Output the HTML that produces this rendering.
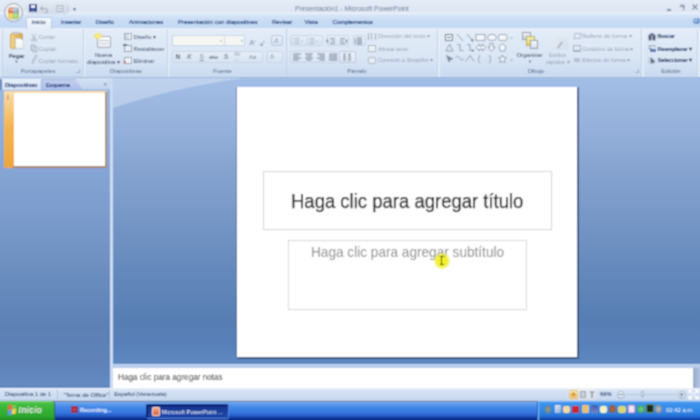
<!DOCTYPE html>
<html><head><meta charset="utf-8">
<style>
*{margin:0;padding:0;box-sizing:border-box}
html,body{width:700px;height:420px;overflow:hidden;background:#c9daf0;font-family:"Liberation Sans",sans-serif}
.a{position:absolute}
#title{left:-4px;top:-4px;width:708px;height:18px;background:linear-gradient(#e7eef8,#dde6f3 85%,#eef3fa)}
#tabs{left:-4px;top:14px;width:708px;height:15px;background:linear-gradient(#dae7f8,#c9dcf5 40%,#c2d7f3)}
#ribbon{left:-4px;top:28px;width:708px;height:50px;background:linear-gradient(#e6eef9,#d4e1f3);border-bottom:1px solid #9fb8dc}
.grp{position:absolute;top:29px;height:48px;border-right:1px solid #c0d1e8;box-shadow:1px 0 0 #eef4fb;background:linear-gradient(#e3ecf8,#dbe6f5 55%,#d3e1f3 78%,#cadaf0)}
.glab{position:absolute;left:0;right:0;bottom:0;height:11px;background:linear-gradient(#d3e1f3,#c9daf0);font-size:5.9px;color:#4f6488;text-align:center;line-height:10px;white-space:nowrap}
.t{position:absolute;white-space:nowrap;font-size:6px;color:#34496a;line-height:8px}
.dis{color:#96a3b6}
.tab{position:absolute;top:18px;font-size:6px;color:#1c3a72;-webkit-text-stroke:0.15px #1c3a72;white-space:nowrap;line-height:9px}
#main{left:113px;top:78px;width:591px;height:286px;background:linear-gradient(rgb(162,190,230) 0%,rgb(150,178,220) 16%,rgb(136,165,209) 30%,rgb(94,132,184) 74%,rgb(87,126,180) 85%,rgb(88,128,184) 93%,rgb(94,136,192) 100%)}
#sheen{left:113px;top:78px;width:587px;height:40px;background:linear-gradient(172deg,rgba(255,255,255,.25) 0,rgba(255,255,255,.12) 45%,rgba(255,255,255,0) 45.5%)}
#left{left:-4px;top:78px;width:114px;height:310px;background:linear-gradient(rgb(158,186,226) 0%,rgb(130,162,210) 34%,rgb(118,152,200) 50%,rgb(92,128,180) 80%,rgb(94,131,185) 92%,rgb(100,138,194) 100%)}
#split{left:110px;top:78px;width:3px;height:310px;background:linear-gradient(90deg,#bcd2ee,#d4e3f6 50%,#bad0ee)}
#notes{left:113px;top:368px;width:580px;height:20px;background:#fff}
#nband{left:113px;top:364px;width:591px;height:4px;background:linear-gradient(#c3d6f0,#b2c9ea)}
#nscroll{left:693px;top:368px;width:11px;height:20px;background:linear-gradient(90deg,#93a9cc,#b3c3dd 60%,#a2b5d5)}
#status{left:-4px;top:388px;width:708px;height:13px;background:linear-gradient(#eaf0f9 0,#eaf0f9 1px,#d6e3f4 2px,#c9daf0 11px,#b9cce8 13px)}
#taskbar{left:-4px;top:401px;width:708px;height:23px;background:linear-gradient(#5d6e8e 0,#5d6e8e 1px,#80b4f4 1px,#5a98ec 3px,#4185e6 7px,#3474dc 12px,#2458c4 15px,#12389e 17px,#0b2680 19px,#0b2680 23px)}
#slide{left:237px;top:87px;width:340px;height:270px;background:#fff;box-shadow:-1px 0 0 rgba(60,80,125,.45),2px 0 0 rgba(60,78,120,.65),0 2px 0 rgba(60,78,120,.6),2px 2px 0 rgba(60,78,120,.6)}
.ico{position:absolute}
</style></head><body><svg width="0" height="0" style="position:absolute"><filter id="bl" x="0" y="0" width="100%" height="100%"><feConvolveMatrix order="3" kernelMatrix="1 2 1 2 4 2 1 2 1" divisor="16" edgeMode="duplicate" preserveAlpha="true"/></filter></svg><div id="wrap" style="position:absolute;left:-4px;top:-4px;width:708px;height:428px;filter:url(#bl);background:#dfe8f4"><div style="position:absolute;left:4px;top:4px;width:700px;height:420px">
<div id="title" class="a"></div>
<div id="tabs" class="a"></div>
<div id="ribbon" class="a"></div>

<!-- title bar contents -->
<div class="a" style="left:25px;top:2px;width:46px;height:12px;border-radius:6px;background:linear-gradient(#e3e9f2,#d2dae6)"></div>
<div class="a" style="left:29px;top:4px;width:7.5px;height:8px;background:#263f88;border-radius:1px"></div>
<div class="a" style="left:30.5px;top:4.5px;width:4.5px;height:3px;background:#e4ebf5"></div><div class="a" style="left:31px;top:9.5px;width:3.5px;height:2px;background:#6a7fb0"></div>
<svg class="a" style="left:39px;top:3px" width="10" height="10"><path d="M2.5 5.5h4a2.3 2.3 0 0 1 0 4.5h-2" fill="none" stroke="#9aa7ba" stroke-width="1.2"/><path d="M1 5.5l2.5-2.5v5z" fill="#9aa7ba"/></svg>
<svg class="a" style="left:55px;top:3px" width="10" height="10"><rect x="2" y="2.5" width="6" height="6" fill="none" stroke="#aab5c6" stroke-width="1"/><path d="M4 5.5h3" stroke="#aab5c6"/></svg><div class="a" style="left:67px;top:5px;width:1px;height:6px;background:#c3ccd9"></div>
<div class="a" style="left:72px;top:6px;font-size:5px;color:#3c4f6e">&#9660;</div>
<div class="t" style="left:295px;top:4px;font-size:6.8px;color:#6f7f98;line-height:9px">Presentación1 - Microsoft PowerPoint</div>
<div class="a" style="left:667px;top:9px;width:4px;height:1.5px;background:#7d8aa0"></div>
<svg class="a" style="left:677px;top:3px" width="9" height="9"><path d="M2.5 3.5h4v4M3.5 2h3.5v3.5" fill="none" stroke="#7d8aa0" stroke-width="1"/></svg>
<svg class="a" style="left:691px;top:3px" width="8" height="8"><path d="M1.5 1.5l5 5M6.5 1.5l-5 5" stroke="#7d8aa0" stroke-width="1.1"/></svg>
<!-- office button -->
<div class="a" style="left:4px;top:3px;width:19px;height:19px;border-radius:50%;background:radial-gradient(circle at 50% 45%,#ffffff 0,#f6f6f2 50%,#e2e5e8 72%,#aeb6c2 88%,#c9d0da 100%);border:1px solid #98a2b0"></div>
<div class="a" style="left:7.5px;top:7px;width:5.5px;height:6px;background:radial-gradient(circle at 60% 60%,#e88a5a,#c8563a);border-radius:3px 0 0 0"></div>
<div class="a" style="left:13px;top:7px;width:5.5px;height:6px;background:radial-gradient(circle at 40% 60%,#a9b8c8,#7f93ad);border-radius:0 3px 0 0"></div>
<div class="a" style="left:7.5px;top:13px;width:5.5px;height:6px;background:radial-gradient(circle at 60% 40%,#f4e07a,#e2b83a);border-radius:0 0 0 3px"></div>
<div class="a" style="left:13px;top:13px;width:5.5px;height:6px;background:radial-gradient(circle at 40% 40%,#c9e6a0,#7fb54a);border-radius:0 0 3px 0"></div>
<div class="a" style="left:8px;top:6px;width:10px;height:5px;border-radius:50%;background:rgba(255,255,255,.35)"></div>
<!-- tabs -->
<div class="a" style="left:26px;top:17px;width:26px;height:12px;background:linear-gradient(#f4f8fd,#e3ecf8);border:1px solid #b8cbe6;border-bottom:none;border-radius:2px 2px 0 0"></div>
<div class="tab" style="left:31.5px;color:#4a5a75">Inicio</div>
<div class="tab" style="left:61px">Insertar</div>
<div class="tab" style="left:95.5px">Diseño</div>
<div class="tab" style="left:129px">Animaciones</div>
<div class="tab" style="left:178px">Presentación con diapositivas</div>
<div class="tab" style="left:272px">Revisar</div>
<div class="tab" style="left:304.5px">Vista</div>
<div class="tab" style="left:332.5px">Complementos</div>
<div class="a" style="left:693px;top:17.5px;width:6.5px;height:6.5px;border-radius:50%;background:radial-gradient(circle at 40% 35%,#a9c6ee,#3f6fb8)"></div>

<!-- groups -->
<div class="grp" style="left:2px;width:82px;border-left:1px solid #c6d6eb"><div class="glab" style="padding-right:10px">Portapapeles</div></div>
<div class="grp" style="left:85px;width:83px"><div class="glab">Diapositivas</div></div>
<div class="grp" style="left:169px;width:118px"><div class="glab" style="padding-right:10px">Fuente</div></div>
<div class="grp" style="left:287px;width:151px"><div class="glab" style="padding-right:10px">Párrafo</div></div>
<div class="grp" style="left:441px;width:201px"><div class="glab" style="padding-right:10px">Dibujo</div></div>
<div class="grp" style="left:645px;width:53px"><div class="glab">Edición</div></div>

<!-- Portapapeles -->
<div class="a" style="left:9.5px;top:33px;width:13px;height:15.5px;background:linear-gradient(90deg,#f3d98a,#e6bd5a 45%,#d9a94a);border:1px solid #c99a48;border-radius:2px"></div>
<div class="a" style="left:13px;top:31.5px;width:6px;height:3px;background:#eae6dc;border:1px solid #b3a890;border-radius:1px"></div>
<div class="a" style="left:15px;top:38px;width:8.5px;height:11px;background:linear-gradient(135deg,#ffffff,#eef0f2);border:1px solid #c6c9cf;clip-path:polygon(0 0,65% 0,100% 30%,100% 100%,0 100%)"></div>
<div class="t" style="left:8.8px;top:51.5px;font-size:5.8px;color:#1f2d4a;font-weight:bold;letter-spacing:-0.1px">Pegar</div>
<div class="t" style="left:14.5px;top:58px;font-size:4px;color:#4a5870">&#9660;</div>
<svg class="a" style="left:30px;top:33px" width="8" height="32" fill="none" stroke="#aab5c4" stroke-width="0.9">
<path d="M2 1l3 5M6 1l-3 5"/><circle cx="2.5" cy="7" r="1.3"/><circle cx="5.5" cy="7" r="1.3"/>
<rect x="1" y="12" width="4" height="5"/><rect x="3" y="14" width="4" height="5" fill="#dfe7f2"/>
<path d="M5.5 23.5l-3 6" stroke-width="1.4"/><path d="M5 22.5h2v2" stroke-width="0.8"/>
</svg>
<div class="t dis" style="left:38.5px;top:33px;font-size:6px">Cortar</div>
<div class="a" style="left:31px;top:45px;width:5px;height:6px;border:1px solid #b7c2d0"></div>
<div class="t dis" style="left:38.5px;top:45px;font-size:6px">Copiar</div>
<div class="a" style="left:33px;top:56px;width:2px;height:8px;background:#b9c3d0;transform:rotate(25deg)"></div>
<div class="t dis" style="left:38.5px;top:56.7px;font-size:6px">Copiar formato</div>
<div class="a" style="left:76px;top:69px;width:4px;height:4px;border-right:1px solid #9fb0c8;border-bottom:1px solid #9fb0c8"></div>

<!-- Diapositivas -->
<div class="a" style="left:97px;top:36px;width:14px;height:12px;background:linear-gradient(#fdfdfd,#e9edf2);border:1px solid #9aa6b5;border-radius:1px"></div>
<div class="a" style="left:99px;top:40px;width:10px;height:1px;background:#b9c2ce"></div>
<div class="a" style="left:99px;top:43px;width:10px;height:1px;background:#c9d0da"></div>
<div class="a" style="left:94px;top:32.5px;width:8px;height:6px;border-radius:50%;background:radial-gradient(#fffbb0,#f2e060 50%,rgba(240,224,80,0) 100%)"></div>
<div class="t" style="left:95px;top:50.8px;font-size:6px;color:#2a3a55">Nueva</div>
<div class="t" style="left:87px;top:57.8px;font-size:6px;color:#2a3a55">diapositiva &#9662;</div>
<div class="a" style="left:124px;top:33px;width:8px;height:7px;background:linear-gradient(90deg,#c7cfd9,#eef1f5);border:1px solid #9ca8b8"></div>
<div class="t" style="left:133.5px;top:32.7px;font-size:5.8px;color:#34496a">Diseño &#9662;</div>
<div class="a" style="left:124px;top:45px;width:8px;height:7px;background:#e9edf2;border:1px solid #8f9cad"></div>
<div class="a" style="left:123px;top:44px;width:4px;height:2px;background:#5a6a85"></div>
<div class="t" style="left:133.5px;top:44.6px;font-size:5.8px;color:#34496a">Restablecer</div>
<div class="a" style="left:124px;top:57px;width:8px;height:7px;background:#eef1f5;border:1px solid #9ca8b8"></div>
<div class="a" style="left:123px;top:60px;width:5px;height:4px;color:#d03030;font-size:6px;line-height:4px">&#215;</div>
<div class="t" style="left:133.5px;top:56.6px;font-size:5.8px;color:#34496a">Eliminar</div>

<!-- Fuente -->
<div class="a" style="left:172px;top:35px;width:53px;height:11px;background:#f6f7f1;border:1px solid #c9d6e8"></div>
<div class="t" style="left:220px;top:37px;font-size:4px;color:#9aa6b6">&#9662;</div>
<div class="a" style="left:225px;top:35px;width:20px;height:11px;background:#f4f6f4;border:1px solid #c9d6e8;border-left:none"></div>
<div class="t" style="left:241px;top:37px;font-size:4px;color:#9aa6b6">&#9662;</div>

<div class="t" style="left:249.5px;top:37px;font-size:6.5px;color:#6f7b8e">A<sup style="font-size:3px">▴</sup></div>
<div class="t" style="left:260px;top:38px;font-size:5.5px;color:#6f7b8e">a<sup style="font-size:3px">▾</sup></div>
<div class="a" style="left:271px;top:35px;width:12px;height:11px;border:1px solid #bcc9dc;border-radius:2px;background:linear-gradient(#e8eef7,#d5e0ef)"></div>
<div class="t" style="left:274px;top:36.5px;font-size:6.5px;color:#9aa4b3;font-style:italic">A</div>
<div class="a" style="left:172px;top:51px;width:91px;height:12px;border:1px solid #c8d5e7;border-radius:2px;background:linear-gradient(#e6eef8,#d7e3f3)"></div>
<div class="t" style="left:175.5px;top:53px;font-size:6.5px;color:#4e5a6c;font-weight:bold">N</div>
<div class="t" style="left:187px;top:53px;font-size:6.5px;color:#7d889a;font-style:italic;font-weight:bold">K</div>
<div class="t" style="left:199.5px;top:53px;font-size:6.5px;color:#7d889a;text-decoration:underline">S</div>
<div class="t" style="left:209px;top:53px;font-size:5.5px;color:#7d889a;text-decoration:line-through">abc</div>
<div class="t" style="left:224px;top:53px;font-size:6.5px;color:#7d889a;font-weight:bold">S</div>
<div class="t" style="left:234px;top:52px;font-size:5px;color:#8e99aa;line-height:5px">AV<br>&#8596;</div>
<div class="t" style="left:249px;top:53px;font-size:6px;color:#7d889a">Aa</div>
<div class="a" style="left:267px;top:51px;width:16px;height:12px;border:1px solid #c8d5e7;border-radius:2px;background:linear-gradient(#e6eef8,#d7e3f3)"></div>
<div class="t" style="left:270px;top:52.5px;font-size:6.5px;color:#9aa4b3">A</div>

<!-- Parrafo -->
<div class="a" style="left:290px;top:35px;width:33px;height:11px;border:1px solid #c8d5e7;border-radius:2px;background:linear-gradient(#e6eef8,#d7e3f3)"></div>
<div class="a" style="left:327px;top:35px;width:22px;height:11px;border:1px solid #c8d5e7;border-radius:2px;background:linear-gradient(#e6eef8,#d7e3f3)"></div>
<div class="a" style="left:353px;top:35px;width:13px;height:11px;border:1px solid #c8d5e7;border-radius:2px;background:linear-gradient(#e6eef8,#d7e3f3)"></div>
<div class="a" style="left:290px;top:51px;width:47px;height:12px;border:1px solid #c8d5e7;border-radius:2px;background:linear-gradient(#e6eef8,#d7e3f3)"></div>
<div class="a" style="left:339px;top:51px;width:17px;height:12px;border:1px solid #b9c7da;border-radius:2px;background:linear-gradient(#eef3fa,#dce6f4)"></div>
<svg class="a" style="left:288px;top:33px" width="80" height="32" viewBox="0 0 80 32" fill="none" stroke-width="0.9">
<g stroke="#a4b0c0"><path d="M4 5.5h1M6.5 5.5h5M4 8h1M6.5 8h5M4 10.5h1M6.5 10.5h5"/><path d="M13 8l1 1 1-1" stroke-width="0.7"/>
<path d="M19 5.5h1M21.5 5.5h5M19 8h1M21.5 8h5M19 10.5h1M21.5 10.5h5"/><path d="M28 8l1 1 1-1" stroke-width="0.7"/></g>
<g stroke="#6a778b"><path d="M42 5.5h5M43.5 8h3.5M42 10.5h5"/><path d="M39 6.5v3M40.5 8h-1.5" stroke-width="1.1"/>
<path d="M52 5.5h5M52 8h3.5M52 10.5h5"/><path d="M58.5 6.5v3M57.5 8h1.5" stroke-width="1.1"/>
<path d="M69 5h5M69 7h5M69 9h5M69 11h5"/><path d="M67.3 5v6" stroke-width="0.8"/></g>
<g stroke="#6f7c90"><path d="M5 21h8M5 23h5.5M5 25h8M5 27h5.5"/>
<path d="M17 21h8M18.5 23h5M17 25h8M18.5 27h5"/>
<path d="M29 21h8M31.5 23h5.5M29 25h8M31.5 27h5.5"/>
<path d="M41 21h8M41 23h8M41 25h8M41 27h8"/>
<path d="M55 21h3M55 23h3M55 25h3M55 27h3M60 21h3M60 23h3M60 25h3M60 27h3"/></g>
</svg>
<div class="a" style="left:368px;top:33px;width:8px;height:7px;border-left:1px solid #9aa5b5;border-right:1px solid #9aa5b5;background:linear-gradient(90deg,#fff0 30%,#9aa5b5 30%,#9aa5b5 45%,#fff0 45%,#fff0 60%,#9aa5b5 60%,#9aa5b5 75%,#fff0 75%)"></div>
<div class="t dis" style="left:378px;top:32.3px;font-size:5.8px">Dirección del texto &#9662;</div>
<div class="a" style="left:368px;top:45px;width:8px;height:7px;border:1px solid #a9b4c3;background:#eef2f7"></div>
<div class="t dis" style="left:378px;top:44.9px;font-size:5.4px">Alinear texto</div>
<div class="a" style="left:368px;top:57px;width:8px;height:7px;border:1px solid #aab5c4;border-radius:2px;background:#e9eef5"></div>
<div class="t dis" style="left:378px;top:56.3px;font-size:5.5px">Convertir a SmartArt &#9662;</div>

<!-- Dibujo -->
<svg class="a" style="left:444px;top:31px" width="70" height="35" viewBox="0 0 70 35" fill="none" stroke="#7f8b9e" stroke-width="0.8">
<rect x="1.5" y="3.5" width="7" height="6" fill="#f4f6f9" stroke="#5d6a80" stroke-width="1"/><path d="M3 6.5h4" stroke="#5d6a80" stroke-width="1.2"/>
<path d="M13 3l6 7"/>
<path d="M23 3l5.5 6.5"/><path d="M27.5 8.5l1.5 1.5" stroke-width="1.8" stroke="#5d6a80"/>
<rect x="32" y="3.5" width="9" height="6" fill="#f4f6f9"/>
<ellipse cx="48" cy="6.5" rx="4.3" ry="3" fill="#f4f6f9"/>
<rect x="54.5" y="3.5" width="8.5" height="6" rx="2" fill="#f4f6f9"/>
<path d="M2 20l3.5-7 3.5 7z"/>
<path d="M13 13.5h3v6h3.5"/>
<path d="M23 13.5h3v6h2.5"/><path d="M28 19l1.5 1" stroke-width="1.6" stroke="#5d6a80"/>
<path d="M32 16.5l3.5-3.3v1.8h3v-1.8l3.5 3.3-3.5 3.3v-1.8h-3v1.8z" fill="#f4f6f9"/>
<path d="M46 12.5h3v3.5h2l-3.5 4.5-3.5-4.5h2z" fill="#f4f6f9"/>
<path d="M55 15.5l3.5-2.8 3.5 2.8-1.3 4.5h-4.4z" fill="#f4f6f9"/>
<path d="M2.5 24.5l2.5 6.5 1.5-2.5 2.5-.5z" fill="#7b879b"/>
<path d="M11.5 26.5c2-2 3.5-1 4.5 1s2.5 2 3.5 0"/>
<path d="M21.5 30.5l4.5-6 4 6"/>
<path d="M36 24c-2 2-2 6.5 0 8.5"/>
<path d="M45 24c2 2 2 6.5 0 8.5"/>
<path d="M58.5 24l1.2 2.6 2.8.3-2.1 1.9.6 2.8-2.5-1.4-2.5 1.4.6-2.8-2.1-1.9 2.8-.3z" fill="#f4f6f9"/>
<path d="M66 7h3M67.5 18l.01 0M66.5 28l2 2M68.5 28l-2 2" stroke="#a3aebe" stroke-width="0.8"/>
</svg>
<div class="a" style="left:522px;top:32px;width:9px;height:8px;background:linear-gradient(#eef1f5,#c9d0da);border:1px solid #8f9aaa"></div>
<div class="a" style="left:526px;top:36px;width:9px;height:10px;background:linear-gradient(#f7f1b0,#e2d05a);border:1px solid #b9ac60"></div>
<div class="a" style="left:530px;top:40px;width:8px;height:9px;background:linear-gradient(#f8f9fb,#d8dee7);border:1px solid #8f9aaa"></div>
<div class="t" style="left:516.5px;top:50.8px;font-size:5.9px;color:#34445e">Organizar</div>
<div class="t" style="left:528px;top:58px;font-size:4px;color:#4a5870">&#9660;</div>
<div class="a" style="left:552px;top:37px;width:16px;height:13px;background:linear-gradient(135deg,#e4eaf2,#d6dee9);border-radius:1px"></div>
<div class="a" style="left:559px;top:41px;width:2px;height:8px;background:#aeb9c8;transform:rotate(35deg)"></div>
<div class="t dis" style="left:549px;top:51px;font-size:5.8px">Estilos</div>
<div class="t dis" style="left:546px;top:58.3px;font-size:5.8px">rápidos &#9662;</div>
<div class="a" style="left:574px;top:33px;width:7px;height:6px;border:1px solid #b0bbcb;transform:skewX(-15deg)"></div>
<div class="t dis" style="left:582.3px;top:32.3px;font-size:5.9px">Relleno de forma &#9662;</div>
<div class="a" style="left:573px;top:45px;width:8px;height:7px;border:1px solid #a5b1c2;border-bottom-width:2px"></div>
<div class="t dis" style="left:582.3px;top:44.9px;font-size:5.6px">Contorno de forma &#9662;</div>
<div class="a" style="left:574px;top:58px;width:6px;height:4px;background:#b7c2d1;border-radius:1px"></div>
<div class="t dis" style="left:582.3px;top:56.3px;font-size:5.75px">Efectos de forma &#9662;</div>
<div class="a" style="left:635px;top:69px;width:4px;height:4px;border-right:1px solid #9fb0c8;border-bottom:1px solid #9fb0c8"></div>

<!-- Edicion -->
<svg class="a" style="left:647px;top:32px" width="11" height="32" fill="none">
<rect x="1.5" y="2.5" width="3" height="6" rx="1" fill="#4a5870"/><rect x="5.5" y="2.5" width="3" height="6" rx="1" fill="#4a5870"/><rect x="3.5" y="1" width="3" height="3" fill="#6a7890"/>
<path d="M1.5 14h3M1.5 16.5h3" stroke="#6a7890" stroke-width="1"/><rect x="3" y="17" width="6" height="3" fill="#5a78b0"/><path d="M5 13.5h3v2" stroke="#8a98ad" stroke-width="0.8"/>
<path d="M3.5 25v7l1.8-1.8 1.2 2.5 1-.5-1.2-2.4h2.4z" fill="#5d6b82"/><path d="M1 25.5h1M1 28h1M1 30.5h1" stroke="#9aa6b8" stroke-width="0.8"/>
</svg>
<div class="t" style="left:657.5px;top:32.3px;font-size:5.6px;color:#22375f;-webkit-text-stroke:0.2px #22375f">Buscar</div>
<div class="t" style="left:657.5px;top:44.9px;font-size:5.6px;color:#22375f;-webkit-text-stroke:0.2px #22375f">Reemplazar &#9662;</div>
<div class="t" style="left:657.5px;top:56.3px;font-size:5.75px;color:#22375f;-webkit-text-stroke:0.2px #22375f">Seleccionar &#9662;</div>

<div id="left" class="a"></div>
<div id="split" class="a"></div>
<div id="main" class="a"></div>
<div id="slide" class="a"></div>
<div id="nband" class="a"></div><div id="notes" class="a"></div>
<div id="nscroll" class="a"></div>
<div id="status" class="a"></div>
<div id="taskbar" class="a"></div>

<!-- left panel -->
<div class="a" style="left:0;top:78px;width:110px;height:12px;background:linear-gradient(#d3e1f3,#c3d5ee);border-bottom:1px solid #a9c0e2"></div>
<div class="a" style="left:0;top:79px;width:2px;height:11px;background:#5d7fb8"></div>
<div class="a" style="left:40px;top:79px;width:43px;height:11px;background:linear-gradient(#c4d0f0,#a9bce8);border-top:1px solid #9db2dc;clip-path:polygon(0 0,82% 0,100% 100%,0 100%)"></div>
<div class="a" style="left:2px;top:79px;width:40px;height:11px;background:linear-gradient(#e6eef9,#d2e0f3);border-right:1px solid #9fb7da"></div>
<div class="t" style="left:5px;top:80.5px;font-size:5.8px;color:#14296a;line-height:8px;font-weight:bold;letter-spacing:-0.15px">Diapositivas</div>
<div class="t" style="left:46px;top:80.5px;font-size:5.7px;color:#1a3272;line-height:8px;-webkit-text-stroke:0.15px #1a3272">Esquema</div>
<div class="t" style="left:103.5px;top:80px;font-size:6px;color:#5d6f8c;line-height:8px">&#215;</div>
<div class="a" style="left:4px;top:91px;width:103px;height:77px;background:linear-gradient(#f9dcaa,#f3b552 45%,#eea43a);border-radius:1px"></div>
<div class="a" style="left:13.5px;top:92.5px;width:91.5px;height:73px;background:#fff"></div>
<div class="a" style="left:105px;top:92px;width:2px;height:75px;background:#ad8f72"></div>
<div class="a" style="left:13px;top:165.5px;width:94px;height:2.5px;background:#a88a6e"></div>
<div class="t" style="left:6.5px;top:94px;font-size:5px;color:#8a6a40;line-height:6px">1</div>
<svg class="a" style="left:113px;top:78px" width="140" height="32"><path d="M0 0V30Q55 11 130 0Z" fill="rgba(255,255,255,0.3)"/></svg>

<!-- slide content -->
<div class="a" style="left:263px;top:171px;width:289px;height:59px;border:1px solid #d2d2d2"></div>
<div class="t" style="left:291px;top:188.5px;font-size:20px;line-height:24px;color:#1a1a1a;-webkit-text-stroke:0.25px #1a1a1a;transform:scaleX(0.925);transform-origin:0 0">Haga clic para agregar título</div>
<svg class="a" style="left:288px;top:240px" width="239" height="70"><rect x="0.5" y="0.5" width="238" height="69" fill="none" stroke="#c2c2c2" stroke-width="1" stroke-dasharray="2 1"/></svg>
<div class="t" style="left:310.8px;top:244px;font-size:14.2px;line-height:17px;color:#8a8a8a;transform:scaleX(0.96);transform-origin:0 0">Haga clic para agregar subtítulo</div>
<div class="a" style="left:433.5px;top:253px;width:16px;height:16px;border-radius:50%;background:radial-gradient(rgba(245,240,0,.95) 0,rgba(240,236,20,.85) 45%,rgba(240,238,60,.45) 72%,rgba(240,238,60,0) 100%)"></div>
<div class="a" style="left:441px;top:256px;width:1px;height:9px;background:#222"></div>
<div class="a" style="left:439.5px;top:256px;width:4px;height:1px;background:#222"></div>
<div class="a" style="left:439.5px;top:264px;width:4px;height:1px;background:#222"></div>

<!-- notes -->
<div class="t" style="left:118px;top:371.5px;font-size:9px;line-height:10px;color:#1c1c1c;transform:scaleX(0.905);transform-origin:0 0">Haga clic para agregar notas</div>

<!-- status bar -->
<div class="t" style="left:5px;top:391px;font-size:5.8px;color:#1a2b50;line-height:7px">Diapositiva 1 de 1</div>
<div class="a" style="left:57px;top:390px;width:1px;height:9px;background:#b3c5de"></div>
<div class="t" style="left:63.4px;top:391px;font-size:6.1px;color:#1a2b50;line-height:7px">"Tema de Office"</div>
<div class="a" style="left:109px;top:390px;width:1px;height:9px;background:#b3c5de"></div>
<div class="t" style="left:114.2px;top:391px;font-size:5.7px;color:#1a2b50;line-height:7px">Español (Venezuela)</div>
<div class="a" style="left:568px;top:389px;width:28px;height:11px;background:linear-gradient(#e9eef0,#d6dfe6)"></div>
<div class="a" style="left:569px;top:390px;width:9px;height:9px;background:linear-gradient(#fff3c8,#f6cf7a);border:1px solid #dcb86a;border-radius:1px"></div>
<div class="a" style="left:571px;top:392px;width:5px;height:5px;background:#d9a54a;border-radius:50%"></div>
<div class="a" style="left:580px;top:391px;width:6px;height:7px;border:1px solid #98a4b4;background:#c6cfdb"></div>
<div class="a" style="left:589px;top:391px;width:6px;height:7px;background:linear-gradient(#aab5c4,#8e9aab);clip-path:polygon(0 0,100% 0,65% 45%,65% 100%,35% 100%,35% 45%)"></div>
<div class="t" style="left:600px;top:391px;font-size:5.8px;color:#3a5078;line-height:7px;font-weight:bold">69%</div>
<div class="a" style="left:616.5px;top:390.5px;width:8px;height:8px;border-radius:50%;border:1px solid #9fb2cc;background:linear-gradient(#f3f6fa,#d5deea)"></div>
<div class="a" style="left:618.5px;top:394px;width:4px;height:1px;background:#5a6f92"></div>
<div class="a" style="left:626px;top:394px;width:51px;height:1px;background:#b4c6de"></div>
<div class="a" style="left:641px;top:391px;width:3px;height:6px;background:linear-gradient(#f4f7fb,#d0dbe9);border:1px solid #9fb2cc"></div>
<div class="a" style="left:677.5px;top:390.5px;width:8px;height:8px;border-radius:50%;border:1px solid #9fb2cc;background:linear-gradient(#f3f6fa,#d5deea)"></div>
<div class="a" style="left:679.5px;top:394px;width:4px;height:1px;background:#5a6f92"></div>
<div class="a" style="left:681px;top:392.5px;width:1px;height:4px;background:#5a6f92"></div>
<svg class="a" style="left:688px;top:389px" width="11" height="11"><path d="M1.5 1.5l3 3M9.5 1.5l-3 3M1.5 9.5l3-3M9.5 9.5l-3-3M1 1h3M1 1v3M10 1h-3M10 1v3M1 10h3M1 10v-3M10 10h-3M10 10v-3" stroke="#fff" stroke-width="1.2"/></svg>

<!-- taskbar -->
<div class="a" style="left:-4px;top:401px;width:58px;height:23px;background:linear-gradient(#78d474 0,#42bd3f 3px,#33b033 10px,#2ba52b 16px,#1f8c22 19px,#1f8c22 23px);border-radius:0 3px 0 0;box-shadow:1px 0 1px #2a6a2a"></div>
<div class="a" style="left:8px;top:405px;width:3.5px;height:4.5px;background:#e86a3a;transform:skewX(-12deg)"></div>
<div class="a" style="left:12px;top:404.5px;width:3.5px;height:4.5px;background:#7ac25a;transform:skewX(-12deg)"></div>
<div class="a" style="left:7.5px;top:409.5px;width:3.5px;height:4.5px;background:#5a9ae0;transform:skewX(-12deg)"></div>
<div class="a" style="left:11.5px;top:409px;width:3.5px;height:4.5px;background:#f2d24a;transform:skewX(-12deg)"></div>
<div class="t" style="left:18.5px;top:404.5px;font-size:8.8px;line-height:11px;color:#ffffff;font-style:italic;letter-spacing:0.5px;-webkit-text-stroke:0.2px #fff;text-shadow:0 0 1px #1e6a1e">Inicio</div>
<div class="a" style="left:71px;top:406px;width:7px;height:7px;background:radial-gradient(#d03a4a,#7a2a5a);border-radius:1px"></div>
<div class="t" style="left:80px;top:406px;font-size:5.6px;line-height:8px;color:#f2f6ff;font-weight:bold;letter-spacing:-0.1px">Recording...</div>
<div class="a" style="left:146px;top:404px;width:83px;height:15px;background:linear-gradient(#14318a,#1a3f9e 50%,#1e48ac);border:1px solid #4f7fd6;border-top-color:#0e2a78;border-left-color:#0e2a78;border-radius:2px;box-shadow:inset 1px 1px 1px #0a2268"></div>
<div class="a" style="left:152px;top:407px;width:8px;height:9px;background:linear-gradient(#f3a68a,#d9583a);border:1px solid #f5d4c0;border-radius:1px"></div>
<div class="t" style="left:161.4px;top:407.5px;font-size:5.8px;line-height:8px;color:#fff">Microsoft PowerPoint ...</div>
<div class="a" style="left:537px;top:401px;width:167px;height:23px;background:linear-gradient(#7fbcf6 0,#3e94ec 2px,#3389e6 9px,#2a7ade 14px,#1a56c0 17px,#12378e 19px,#12378e 23px);border-left:1px solid #1d5ab8;box-shadow:inset 1px 0 1px #7fc0f8"></div>
<div class="a" style="left:545px;top:406px;width:6px;height:7px;background:radial-gradient(#8fa79a,#5f7566);border-radius:2px"></div>
<div class="a" style="left:555px;top:405px;width:6px;height:8px;background:linear-gradient(135deg,#e8eef8,#8aa6d8);border-radius:1px"></div>
<div class="a" style="left:563px;top:406px;width:7px;height:7px;background:#f2d9a0;border-radius:2px"></div>
<div class="a" style="left:572px;top:406px;width:7px;height:7px;background:#c8282a;border-radius:1px"></div>
<div class="a" style="left:582px;top:405px;width:7px;height:8px;background:#e2c078;border-radius:1px"></div>
<div class="a" style="left:591px;top:405px;width:7px;height:8px;background:linear-gradient(#4a58a8,#6f86c8);border-radius:1px"></div>
<div class="a" style="left:600px;top:406px;width:7px;height:7px;background:#f3f3c6;border-radius:2px"></div>
<div class="a" style="left:609px;top:405px;width:7px;height:8px;background:radial-gradient(#b07048,#7a4a30);border-radius:50%"></div>
<div class="a" style="left:618px;top:406px;width:8px;height:7px;background:#d9d870;border-radius:2px"></div>
<div class="a" style="left:628px;top:405px;width:7px;height:8px;background:#f2e4f0;border:1px solid #c9a0c8;border-radius:1px"></div>
<div class="a" style="left:637px;top:405px;width:8px;height:8px;background:radial-gradient(#7ad28a,#2a8a4a);border-radius:50%"></div>
<div class="a" style="left:646px;top:404px;width:8px;height:9px;background:#1d2a20;border:1px solid #5a8a4a"></div>
<div class="a" style="left:655px;top:405px;width:7px;height:8px;background:radial-gradient(#b9c0c8,#6f7884);border-radius:50%"></div>
<div class="t" style="left:666px;top:406px;font-size:5.9px;line-height:8px;color:#fff">02:42 a.m.</div>
</div></div></body></html>
